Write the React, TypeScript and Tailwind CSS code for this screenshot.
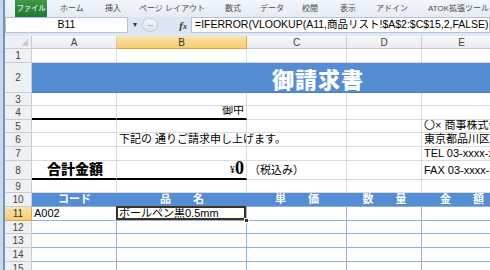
import React from 'react';

const jp = { fontFamily: '"Liberation Sans", "Noto Sans CJK JP", sans-serif' };

const tabs = [
  { label: 'ホーム', w: 'w-[50px]' },
  { label: '挿入', w: 'w-[32px]' },
  { label: 'ページ レイアウト', w: 'w-[86px]' },
  { label: '数式', w: 'w-[36px]' },
  { label: 'データ', w: 'w-[42px]' },
  { label: '校閲', w: 'w-[34px]' },
  { label: '表示', w: 'w-[42px]' },
  { label: 'アドイン', w: 'w-[46px]' },
];

const colW = ['w-[85px]', 'w-[130px]', 'w-[100px]', 'w-[75px]', 'w-[80px]'];

type RowProps = {
  n: number;
  h: string;
  active?: boolean;
  children: React.ReactNode;
};

const Row: React.FC<RowProps> = ({ n, h, active, children }) => (
  <div className={`flex ${h}`}>
    <div
      className={`w-[27px] shrink-0 flex items-center justify-center text-[10px] border-r border-b ${
        active
          ? 'bg-gradient-to-b from-[#fbe3b0] to-[#f6cc6e] border-[#e3a53c] text-[#333]'
          : 'bg-[#eef0f3] border-[#c5cbd4] text-[#444]'
      }`}
    >
      {n}
    </div>
    {children}
  </div>
);

const Cell: React.FC<{ i: number; className?: string; children?: React.ReactNode }> = ({ i, className = '', children }) => (
  <div className={`${colW[i]} shrink-0 border-r border-b flex items-end px-[2px] text-[11px] leading-[13px] text-black whitespace-nowrap overflow-hidden ${className}`}>
    {children}
  </div>
);

const plain = 'border-[#dadcdd]';
const blueLine = 'border-[#8db3e2]';

const Plain: React.FC<{ n: number; h: string }> = ({ n, h }) => (
  <Row n={n} h={h}>
    {[0, 1, 2, 3, 4].map(i => <Cell key={i} i={i} className={plain} />)}
  </Row>
);

const TableRow: React.FC<{ n: number; h: string }> = ({ n, h }) => (
  <Row n={n} h={h}>
    {[0, 1, 2, 3, 4].map(i => <Cell key={i} i={i} className={blueLine} />)}
  </Row>
);

export default function App() {
  return (
    <div className="w-[490px] h-[270px] overflow-hidden bg-[#dfe8f3] flex" style={jp}>
      {/* window frame */}
      <div className="w-[5px] shrink-0 flex">
        <div className="w-[3px] bg-[#c9d7ea]" />
        <div className="w-[2px] bg-[#6f93c2]" />
      </div>

      <div className="flex-1 flex flex-col min-w-0">
        {/* ribbon tabs */}
        <div className="h-[17px] shrink-0 flex items-stretch overflow-hidden bg-gradient-to-b from-[#f3f6fb] to-[#e3ebf6] text-[8px] text-[#4a4a4a]">
          <div className="w-[10px] shrink-0" />
          <div className="w-[32px] shrink-0 bg-gradient-to-b from-[#3c9a47] to-[#22772f] text-white flex items-center justify-center text-[7.5px] whitespace-nowrap tracking-[-0.3px]">
            ファイル
          </div>
          {tabs.map(t => (
            <div key={t.label} className={`${t.w} shrink-0 flex items-center justify-center whitespace-nowrap`}>
              {t.label}
            </div>
          ))}
          <div className="shrink-0 flex items-center pl-[13px] whitespace-nowrap">ATOK拡張ツール</div>
        </div>

        {/* formula bar */}
        <div className="h-[16px] shrink-0 flex items-stretch bg-[#dce6f2]">
          <div className="w-[123px] bg-white border border-[#b6c3d4] flex items-center justify-center text-[10.5px] text-black">
            B11
          </div>
          <div className="w-[14px] flex items-center justify-center text-[7px] text-[#333]">▼</div>
          <div className="w-[16px] my-[1px] rounded-full bg-gradient-to-b from-[#f4f6f9] to-[#dde3ea] border border-[#c2cad4] flex items-center justify-center">
            <div className="w-[5px] h-[1px] bg-[#b0b6be]" />
          </div>
          <div className="w-[33px] flex items-center justify-end pr-[4px] text-[11px] italic font-bold text-[#333]" style={{ fontFamily: '"Liberation Serif", serif' }}>
            f<span className="text-[8px] mt-[3px]">x</span>
          </div>
          <div className="flex-1 bg-white border border-[#b6c3d4] flex items-center pl-[3px] text-[10.5px] text-black whitespace-nowrap overflow-hidden">
            =IFERROR(VLOOKUP(A11,商品リスト!$A$2:$C$15,2,FALSE),"")
          </div>
        </div>

        <div className="h-[3px] shrink-0" />

        {/* sheet */}
        <div className="flex-1 bg-white relative">
          {/* column headers */}
          <div className="flex h-[13px] text-[10px] text-[#444]">
            <div className="w-[27px] shrink-0 bg-[#eef0f3] border-r border-b border-[#c5cbd4] flex items-end justify-end pr-[3px] pb-[2px]">
              <div className="w-0 h-0 border-l-[7px] border-l-transparent border-b-[7px] border-b-[#c8cdd4]" />
            </div>
            {['A', 'B', 'C', 'D', 'E'].map((c, i) => (
              <div
                key={c}
                className={`${colW[i]} shrink-0 border-r border-b flex items-center justify-center ${
                  c === 'B'
                    ? 'bg-gradient-to-b from-[#fbe3b0] to-[#f6cc6e] border-[#e3a53c] text-[#333]'
                    : 'bg-gradient-to-b from-[#f7f8fa] to-[#e9ecf0] border-[#c5cbd4]'
                }`}
              >
                {c}
              </div>
            ))}
          </div>

          <Plain n={1} h="h-[14px]" />

          <Row n={2} h="h-[30px]">
            <div className="w-[470px] shrink-0 bg-[#548dd4] border-b border-[#4a7fc2] flex items-center pl-[240px]">
              <span className="text-white text-[22px] font-black tracking-[1px] leading-none" style={{ fontFamily: '"Noto Sans CJK JP", serif' }}>
                御請求書
              </span>
            </div>
          </Row>

          <Plain n={3} h="h-[13px]" />

          <Row n={4} h="h-[14px]">
            <Cell i={0} className="border-[#dadcdd] border-b-2 border-b-black" />
            <Cell i={1} className="border-[#dadcdd] border-b-2 border-b-black justify-end pb-[1px]">御中</Cell>
            <Cell i={2} className={plain} />
            <Cell i={3} className={plain} />
            <Cell i={4} className={plain} />
          </Row>

          <Row n={5} h="h-[13px]">
            <Cell i={0} className={plain} />
            <Cell i={1} className={plain} />
            <Cell i={2} className={plain} />
            <Cell i={3} className={plain} />
            <Cell i={4} className={plain}>〇× 商事株式会社</Cell>
          </Row>

          <Row n={6} h="h-[14px]">
            <Cell i={0} className={plain} />
            <Cell i={1} className={`${plain} overflow-visible z-10`}>下記の 通りご請求申し上げます。</Cell>
            <Cell i={2} className={plain} />
            <Cell i={3} className={plain} />
            <Cell i={4} className={plain}>東京都品川区</Cell>
          </Row>

          <Row n={7} h="h-[14px]">
            <Cell i={0} className={plain} />
            <Cell i={1} className={plain} />
            <Cell i={2} className={plain} />
            <Cell i={3} className={plain} />
            <Cell i={4} className={plain}>TEL 03-xxxx-xxxx</Cell>
          </Row>

          <Row n={8} h="h-[19px]">
            <Cell i={0} className="border-[#dadcdd] border-b-2 border-b-black pl-[15px] pb-[1px]">
              <span className="text-[14px] leading-[17px] font-black" style={{ fontFamily: '"Noto Sans CJK JP", serif' }}>合計金額</span>
            </Cell>
            <Cell i={1} className="border-[#dadcdd] border-b-2 border-b-black justify-end pb-[1px]">
              <span className="text-[10px] leading-[16px] self-start mt-[1px]" style={{ fontFamily: '"Liberation Serif", serif' }}>¥</span>
              <span className="text-[18px] leading-[18px] font-bold" style={{ fontFamily: '"Liberation Serif", serif' }}>0</span>
            </Cell>
            <Cell i={2} className={`${plain} pb-[2px]`}>（税込み）</Cell>
            <Cell i={3} className={plain} />
            <Cell i={4} className={`${plain} pb-[2px]`}>FAX 03-xxxx-xxxx</Cell>
          </Row>

          <Plain n={9} h="h-[13px]" />

          <Row n={10} h="h-[14px]">
            {['コード', '品　　名', '単　　価', '数　　量', '金　　額'].map((t, i) => (
              <div
                key={t}
                className={`${colW[i]} shrink-0 bg-[#548dd4] border-b border-[#8db3e2] flex items-center justify-center text-white text-[11px] font-bold whitespace-pre`}
              >
                {t}
              </div>
            ))}
          </Row>

          <Row n={11} h="h-[14px]" active>
            <Cell i={0} className={blueLine}>A002</Cell>
            <Cell i={1} className={`${blueLine} relative overflow-visible`}>
              ボールペン黒0.5mm
              <div className="absolute -left-[1px] -top-[1px] -right-[0px] -bottom-[0px] border-2 border-[#3d3220]" />
              <div className="absolute -right-[3px] -bottom-[3px] w-[5px] h-[5px] bg-[#3d3220] border border-white" />
            </Cell>
            <Cell i={2} className={blueLine} />
            <Cell i={3} className={blueLine} />
            <Cell i={4} className={blueLine} />
          </Row>

          <TableRow n={12} h="h-[13px]" />
          <TableRow n={13} h="h-[14px]" />
          <TableRow n={14} h="h-[14px]" />
          <TableRow n={15} h="h-[14px]" />
        </div>
      </div>
    </div>
  );
}
